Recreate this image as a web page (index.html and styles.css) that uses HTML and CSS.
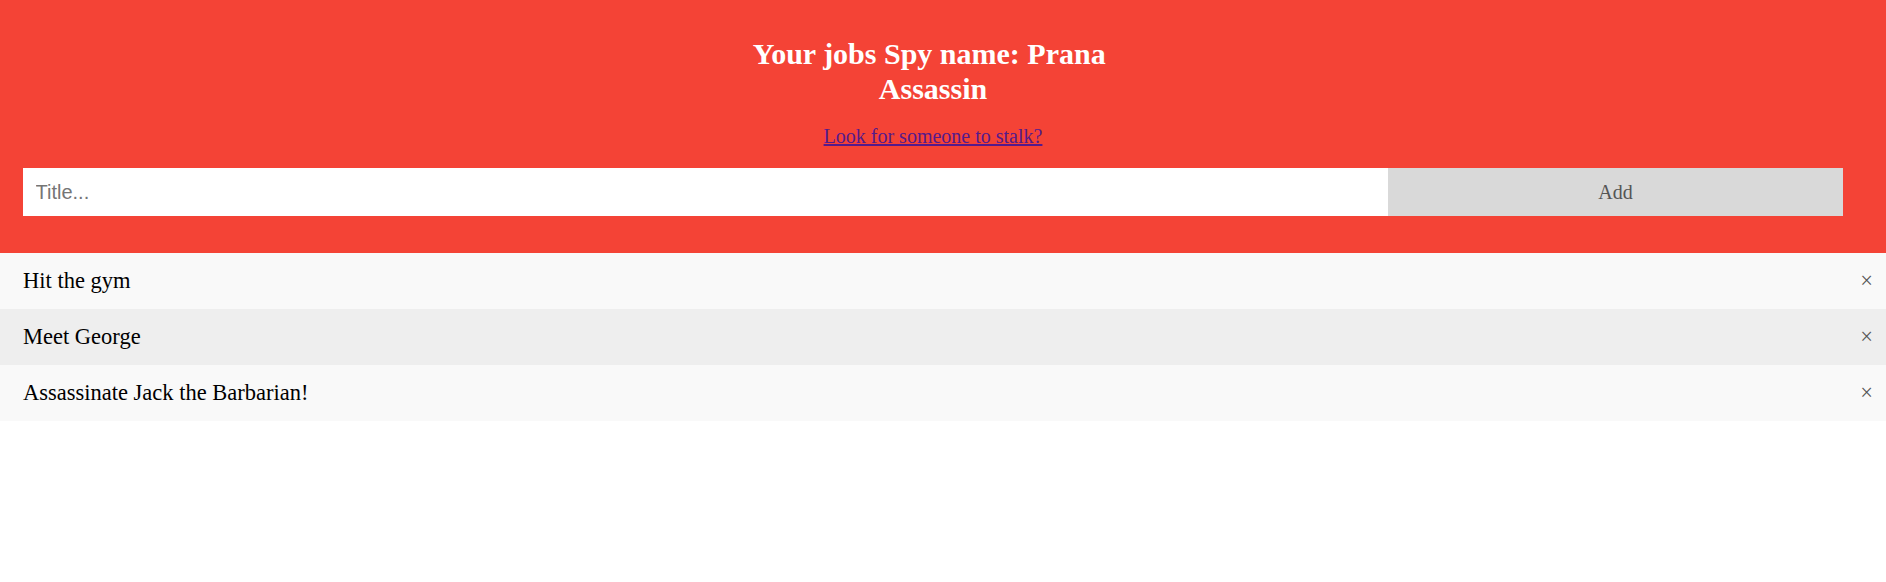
FILE: index.html
```html
<!DOCTYPE html>
<html>
<head>
<meta charset="utf-8">
<title>Your jobs</title>
<link rel="stylesheet" href="styles.css">
</head>
<body>
<div class="header">
  <div class="inner">
    <h2 class="title">Your jobs Spy name: Prana&nbsp;<br>Assassin</h2>
    <p class="stalk"><a class="stalk-link" href="#">Look for someone to stalk?</a></p>
    <div class="form">
      <input class="title-input" type="text" placeholder="Title...">
      <span class="add-btn">Add</span>
    </div>
  </div>
</div>
<ul class="jobs">
  <li class="job"><span class="job-text">Hit the gym</span><span class="close">&#215;</span></li>
  <li class="job"><span class="job-text">Meet George</span><span class="close">&#215;</span></li>
  <li class="job"><span class="job-text">Assassinate Jack the Barbarian!</span><span class="close">&#215;</span></li>
</ul>
</body>
</html>
```

FILE: styles.css
```css
html, body {
  margin: 0;
  padding: 0;
  background: #ffffff;
  font-family: "Liberation Serif", "Times New Roman", serif;
}

.header {
  background-color: #f44336;
  color: #ffffff;
  padding: 37px 43px 37px 23px;
}

.inner {
  display: flex;
  flex-direction: column;
  align-items: center;
  text-align: center;
}

.title {
  margin: 0;
  font-size: 30px;
  font-weight: bold;
  line-height: 34.5px;
}

.stalk {
  margin: 19px 0 0 0;
  font-size: 20px;
  line-height: 23px;
}

.stalk-link {
  color: #551a8b;
  text-decoration: underline;
}

.form {
  margin-top: 20px;
  display: flex;
  width: 100%;
}

.title-input {
  box-sizing: border-box;
  width: 75%;
  height: 48px;
  margin: 0;
  border: none;
  border-radius: 0;
  outline: none;
  padding: 0 12.5px;
  font-family: "Liberation Sans", Arial, sans-serif;
  font-size: 20px;
  color: #000;
  background: #fff;
}

.title-input::placeholder {
  color: #757575;
}

.add-btn {
  box-sizing: border-box;
  width: 25%;
  height: 48px;
  display: flex;
  align-items: center;
  justify-content: center;
  background: #d9d9d9;
  color: #555555;
  font-size: 20px;
}

.jobs {
  list-style: none;
  margin: 0;
  padding: 0;
}

.job {
  display: flex;
  align-items: center;
  justify-content: space-between;
  height: 56px;
  padding: 0 13px 0 23px;
  font-size: 22.5px;
  color: #000;
  background: #eeeeee;
}

.job:nth-child(odd) {
  background: #f9f9f9;
}

.close {
  color: #555555;
  font-size: 22.5px;
}
```
